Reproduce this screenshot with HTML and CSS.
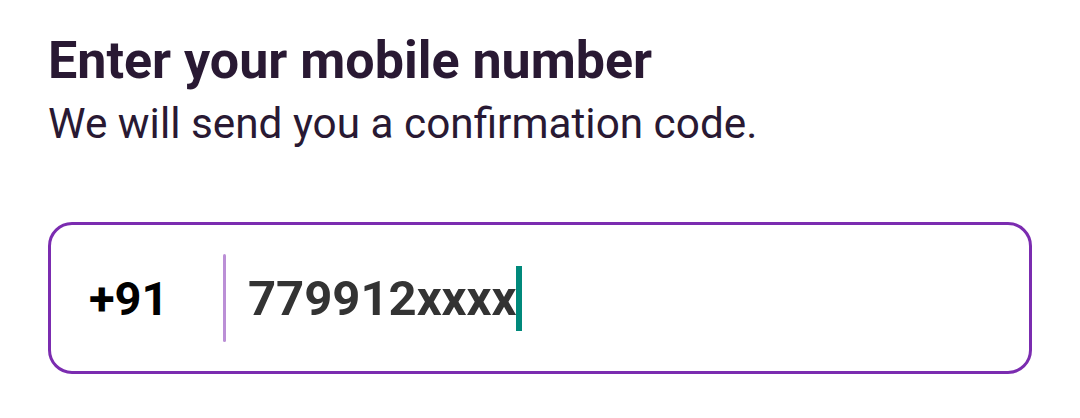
FILE: index.html
```html
<!DOCTYPE html>
<html>
<head>
<meta charset="utf-8">
<link rel="stylesheet" href="styles.css">
</head>
<body>
<main class="page">
  <h1 class="title">Enter your mobile number</h1>
  <p class="subtitle">We will send you a confirmation code.</p>
  <div class="phone-field">
    <span class="prefix">+91</span>
    <span class="divider"></span>
    <span class="number">779912xxxx</span><span class="caret"></span>
  </div>
</main>
</body>
</html>
```

FILE: styles.css
```css
html, body {
  margin: 0;
  padding: 0;
  background: #ffffff;
}
body {
  font-family: Roboto, "Noto Sans", sans-serif;
}
.page {
  padding: 31px 48px 0 48px;
  display: flex;
  flex-direction: column;
}
.title {
  margin: 0;
  font-size: 52px;
  font-weight: 700;
  line-height: 60px;
  color: #291933;
}
.subtitle {
  margin: 8px 0 0 0;
  font-size: 42.3px;
  font-weight: 400;
  line-height: 50px;
  color: #291933;
}
.phone-field {
  margin-top: 73px;
  height: 146px;
  box-sizing: content-box;
  border: 3px solid #7b2cb0;
  border-radius: 24px;
  display: flex;
  align-items: center;
  padding: 0 0 0 38px;
}
.prefix {
  font-size: 47px;
  font-weight: 700;
  color: #000;
  width: 134px;
}
.divider {
  width: 3px;
  height: 88px;
  border-radius: 2px;
  background: #bb8fd6;
  margin-right: 22px;
}
.number {
  font-size: 49px;
  font-weight: 700;
  color: #333333;
}
.caret {
  width: 6px;
  height: 65px;
  background: #00897b;
}
```
